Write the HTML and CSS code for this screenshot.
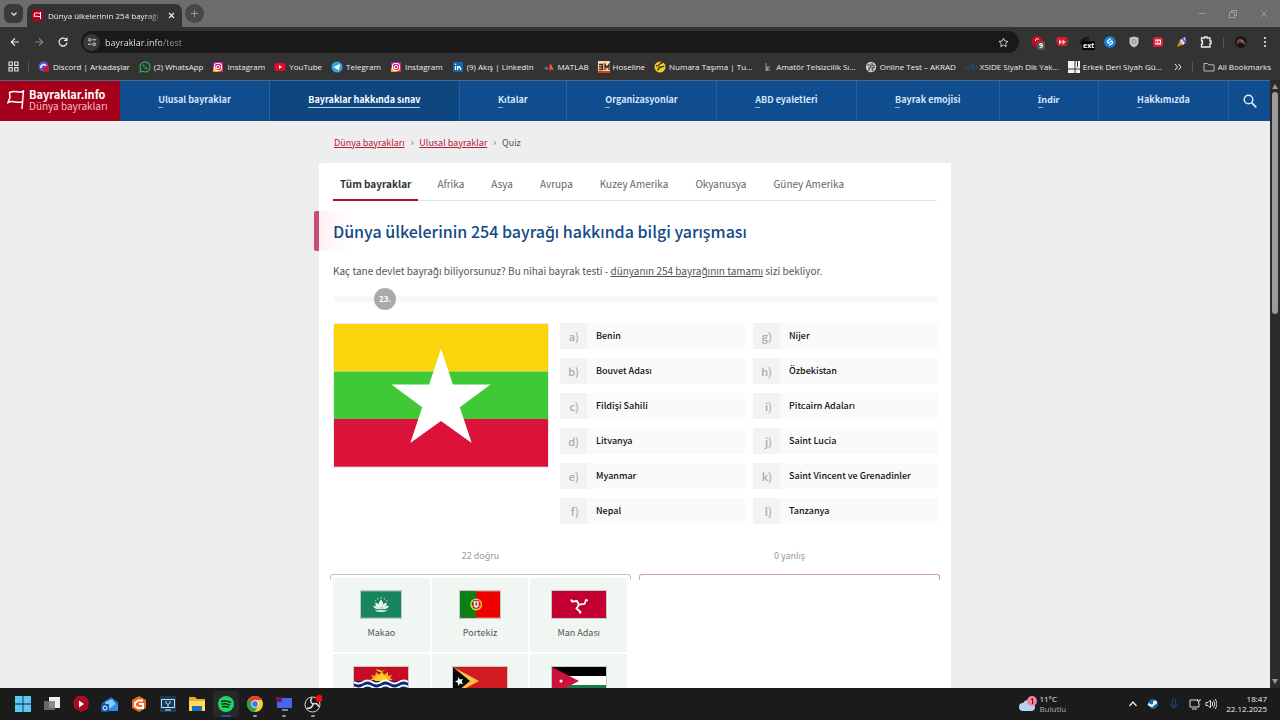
FILE: index.html
```html
<!DOCTYPE html>
<html lang="tr">
<head>
    <meta charset="UTF-8">
    <meta name="viewport" content="width=device-width, initial-scale=1.0">
    <title>Dünya ülkelerinin 254 bayrağı hakkında bilgi yarışması</title>
    <link rel="stylesheet" href="styles.css">
</head>
<body>
    <!-- Browser window -->
    <header class="browser">
        <div class="tab-strip">
            <button class="tab-search" aria-label="Search tabs">
                <svg width="8" height="8" viewBox="0 0 8 8"><path d="M1.5 2.8 4 5.2l2.5-2.4" fill="none" stroke="#eee" stroke-width="1.2"/></svg>
            </button>
            <div class="browser-tab">
                <svg width="11" height="11" viewBox="0 0 11 11"><rect width="11" height="11" rx="1" fill="#b00020"/><path d="M8.500 2v7M8.300 3C6 4 5 2 2.500 3.300L2 6.500c2.500-1 3.500.5 6 0" fill="none" stroke="#fff"/></svg>
                <span class="browser-tab-title">Dünya ülkelerinin 254 bayrağı h</span>
                <button class="tab-close" aria-label="Close">
                    <svg width="7" height="7" viewBox="0 0 7 7"><path d="m1 1 5 5M6 1 1 6" stroke="#eee" stroke-width="1.200"/></svg>
                </button>
            </div>
            <button class="new-tab" aria-label="New tab">
                <svg width="9" height="9" viewBox="0 0 9 9"><path d="M4.500 1v7M1 4.500h7" stroke="#999" stroke-width="1"/></svg>
            </button>
            <div class="window-buttons">
                <button aria-label="Minimize"><svg width="10" height="10" viewBox="0 0 10 10"><path d="M1.500 4.500h7" stroke="#999"/></svg></button>
                <button aria-label="Restore"><svg width="10" height="10" viewBox="0 0 10 10"><path d="M1.500 3.500h5v5h-5zM3.500 3V1.500h5v5H7" fill="none" stroke="#aaa" stroke-width=".8"/></svg></button>
                <button aria-label="Close window"><svg width="10" height="10" viewBox="0 0 10 10"><path d="m2 2 6 6M8 2 2 8" stroke="#aaa" stroke-width=".8"/></svg></button>
            </div>
        </div>

        <div class="toolbar">
            <button aria-label="Back"><svg width="12" height="12" viewBox="0 0 12 12"><path d="M10 6H2.500M6 2.300 2.300 6 6 9.700" fill="none" stroke="#eee" stroke-width="1.200"/></svg></button>
            <button aria-label="Forward"><svg width="12" height="12" viewBox="0 0 12 12"><path d="M2 6h7.500M6 2.300 9.700 6 6 9.700" fill="none" stroke="#888" stroke-width="1.100"/></svg></button>
            <button aria-label="Reload"><svg width="12" height="12" viewBox="0 0 12 12"><path d="M9.500 4A4 4 0 1 0 10 6.700M10 1.500v3H7" fill="none" stroke="#eee" stroke-width="1.200"/></svg></button>
            <div class="address-bar">
                <span class="site-info">
                    <svg width="10" height="10" viewBox="0 0 10 10"><path d="M5.500 2.800H9M1 7.200h3.500" stroke="#ddd"/><circle cx="2.800" cy="2.800" r="1.300" fill="none" stroke="#ddd"/><circle cx="7.200" cy="7.200" r="1.300" fill="none" stroke="#ddd"/></svg>
                </span>
                <input class="address" type="text" aria-label="Address" value="bayraklar.info/test">
                <svg width="11" height="11" viewBox="0 0 24 24"><path d="m12 2.500 2.900 6.300 6.900.8-5.100 4.700 1.400 6.800-6.100-3.400-6.100 3.400 1.400-6.800L2.200 9.600l6.900-.8z" fill="none" stroke="#ddd" stroke-width="2"/></svg>
            </div>
            <div class="extensions">
                <span class="extension"><svg width="14" height="14" viewBox="0 0 14 14"><path d="M4 1h5l3 3v5l-3 3H4L1 9V4z" fill="#c9081c"/><path d="M4.500 6V4.500Q6 2.500 8 4.500" fill="none" stroke="#fff"/></svg><b class="extension-badge gray">9</b></span>
                <span class="extension"><svg width="14" height="14" viewBox="0 0 14 14"><path d="M2 2h10l1 5-2 4H3L1 6z" fill="#d01c30"/><path d="m4 4.500 3 2.500-3 2.500zM7.500 4.500l3 2.500-3 2.500z" fill="#ffd9dd"/></svg></span>
                <span class="extension"><svg width="14" height="14" viewBox="0 0 14 14"><path d="M2 6q3-4 8-3M1 9q3-5 9-4" fill="none" stroke="#161616" stroke-width="1.500"/></svg><b class="extension-badge">ext</b></span>
                <span class="extension"><svg width="14" height="14" viewBox="0 0 14 14"><circle cx="7" cy="7" r="5.800" fill="#1687e0"/><path d="M7.800 3.800 5 5.500Q3.800 7 5.500 8l1.500-.8M6.200 10.200 9 8.500Q10.200 7 8.500 6L7 6.800" fill="none" stroke="#fff" stroke-width="1.200"/></svg></span>
                <span class="extension"><svg width="14" height="14" viewBox="0 0 14 14"><path d="m7 1.500 4.500 1.300v4.500Q11 11 7 12.500 3 11 2.500 7.300V2.800z" fill="#c5c5c5"/><circle cx="7" cy="6.500" r="2" fill="none" stroke="#8c8c8c"/></svg></span>
                <span class="extension"><svg width="14" height="14" viewBox="0 0 14 14"><rect x="2" y="2" width="10" height="10" rx="2" fill="#d81e34"/><path d="M4 4.500h6v5H4z" fill="#fff"/><path d="m4.500 5 2.500 2-2.500 2zM7.200 5l2.300 2-2.300 2z" fill="#d81e34"/></svg></span>
                <span class="extension"><svg width="14" height="14" viewBox="0 0 14 14"><path d="m2 12 3-7 4 4z" fill="#f08a24"/><path d="m5 5 5-3 1 5-3 3z" fill="#e5e2f5"/><path d="m7 3 4 5" stroke="#6454d0" stroke-width="2"/></svg></span>
                <span class="extension"><svg width="14" height="14" viewBox="0 0 14 14"><path d="M2.500 3H5.500V2h2.500v1h3v3h1v2.500h-1v3.500H2.500V9h1V6h-1z" fill="none" stroke="#eee" stroke-width="1.300"/></svg></span>
                <i class="divider"></i>
                <span class="extension"><svg width="14" height="14" viewBox="0 0 14 14"><circle cx="7" cy="7" r="6" fill="#171414"/><path d="M3 5q3-3 6 0l3 3-1 2-5-3-3 3z" fill="#713c3c"/><circle cx="8" cy="6" r="1.500" fill="#8c6663"/></svg></span>
                <span class="extension"><svg width="14" height="14" viewBox="0 0 14 14"><g fill="#eee"><circle cx="7" cy="3" r="1.100"/><circle cx="7" cy="7" r="1.100"/><circle cx="7" cy="11" r="1.100"/></g></svg></span>
            </div>
        </div>

        <nav class="bookmarks" aria-label="Bookmarks">
            <svg width="11" height="11" viewBox="0 0 11 11"><path d="M1 1h3.300v3.300H1zM6.700 1H10v3.300H6.700zM1 6.700h3.300V10H1zM6.700 6.700H10V10H6.700z" fill="none" stroke="#ddd" stroke-width="1.200"/></svg>
            <i class="divider"></i>
            <a href="#"><svg width="12" height="12" viewBox="0 0 12 12"><circle cx="5.500" cy="5.500" r="5" fill="#5a58d6"/><path d="M3 7V5q3-3 5 0" fill="none" stroke="#fff" stroke-width="1.500"/><circle cx="8.500" cy="8" r="3" fill="#d3122b"/></svg>Discord | Arkadaşlar</a>
            <a href="#"><svg width="12" height="12" viewBox="0 0 12 12"><path d="m1 11 .7-2.600A5 5 0 1 1 3.600 10.300z" fill="none" stroke="#2ab25b" stroke-width="1.200"/><path d="M4 3.500Q3.500 5 5 6.700T8.200 8l.4-1.200-1.300-.6-.7.600Q5.500 6.300 5 5.200l.6-.6L5 3.400z" fill="#2ab25b"/></svg>(2) WhatsApp</a>
            <a href="#"><svg width="12" height="12" viewBox="0 0 12 12"><path d="M1 1h10v5L1 11z" fill="#c0219b"/><path d="M1 11V7l3-2 7 6z" fill="#fba13a"/><path d="M11 4v7H7L4 6z" fill="#e52a5b"/><rect x="2.500" y="2.500" width="7" height="7" rx="2" fill="none" stroke="#fff"/><circle cx="6" cy="6" r="1.700" fill="none" stroke="#fff"/></svg>Instagram</a>
            <a href="#"><svg width="12" height="12" viewBox="0 0 12 12"><rect x=".5" y="2" width="11" height="8" rx="2" fill="#e00d2c"/><path d="m5 4.300 3 1.700-3 1.700z" fill="#fff"/></svg>YouTube</a>
            <a href="#"><svg width="12" height="12" viewBox="0 0 12 12"><circle cx="6" cy="6" r="5.500" fill="#34a6dc"/><path d="m2.500 6 6.500-3-1.200 6.200-2.300-1.500z" fill="#fff"/></svg>Telegram</a>
            <a href="#"><svg width="12" height="12" viewBox="0 0 12 12"><path d="M1 1h10v5L1 11z" fill="#c0219b"/><path d="M1 11V7l3-2 7 6z" fill="#fba13a"/><path d="M11 4v7H7L4 6z" fill="#e52a5b"/><rect x="2.500" y="2.500" width="7" height="7" rx="2" fill="none" stroke="#fff"/><circle cx="6" cy="6" r="1.700" fill="none" stroke="#fff"/></svg>Instagram</a>
            <a href="#"><svg width="12" height="12" viewBox="0 0 12 12"><rect x="1" y="1" width="10" height="10" rx="1" fill="#1267b1"/><path d="M3.500 5v4M5.700 9V5M5.700 7q1.500-2.500 2.800 0v2" fill="none" stroke="#fff" stroke-width="1.300"/><circle cx="3.500" cy="3.200" r=".8" fill="#fff"/></svg>(9) Akış | LinkedIn</a>
            <a href="#"><svg width="12" height="12" viewBox="0 0 12 12"><path d="m1 7 3-1.500L6 7 4 9z" fill="#3a8fc4"/><path d="m4 6 3.500-4L7 8 5 9z" fill="#9a2a1c"/><path d="M7.500 2 11 9.500 8.500 8 6.500 11z" fill="#ec6a25"/></svg>MATLAB</a>
            <a href="#"><svg width="12" height="12" viewBox="0 0 12 12"><rect width="12" height="12" fill="#f6d7b0"/><path d="M1 3.500h3.500v5H1M4 6H1M7 9V3.500l2 3 2-3V9" fill="none" stroke="#41240f" stroke-width="1.300"/><path d="M0 10h12v2H0z" fill="#e03a20"/></svg>Hoseline</a>
            <a href="#"><svg width="12" height="12" viewBox="0 0 12 12"><circle cx="6" cy="6" r="5.500" fill="#f7cc25"/><path d="M2 5q3 0 4-2t3-1M4 9.500q0-3 3-3.500t3-1" fill="none" stroke="#3c341c" stroke-width="1.400"/></svg>Numara Taşıma | Tu...</a>
            <a href="#"><svg width="12" height="12" viewBox="0 0 12 12"><path d="M4 2h2v3h3v5H4z" fill="#725d6e"/><path d="M6 6v4" stroke="#c8b8c4"/></svg>Amatör Telsizcilik Sı...</a>
            <a href="#"><svg width="12" height="12" viewBox="0 0 12 12"><circle cx="6" cy="6" r="5.200" fill="#c9c9c9"/><path d="M2 4h3l1 2-2 1v3M7 2v2l3 1M10 7 8 6.500 7 8l1 2" fill="none" stroke="#444" stroke-width="1.200"/></svg>Online Test – AKRAD</a>
            <a href="#"><svg width="12" height="12" viewBox="0 0 12 12"><path d="M1 4v4h3M5 4v4M7 4h2v4H7zM11.500 4v4" fill="none" stroke="#165488"/></svg>XSIDE Siyah Dik Yak...</a>
            <a href="#"><svg width="12" height="12" viewBox="0 0 12 12"><path d="M0 0h12v12H0z" fill="#f3f3f3"/><path d="M7 0v12M0 8h12M9.500 0v6" stroke="#333"/></svg>Erkek Deri Siyah Gü...</a>
            <div class="bookmarks-end">
                <svg width="8" height="8" viewBox="0 0 8 8"><path d="m1 1 2.500 3L1 7M4.500 1 7 4 4.500 7" fill="none" stroke="#eee"/></svg>
                <i class="divider"></i>
                <a href="#"><svg width="12" height="12" viewBox="0 0 12 12"><path d="M1 2.500h3.500l1.200 1.300H11V10H1z" fill="none" stroke="#bbb"/></svg>All Bookmarks</a>
            </div>
        </nav>
    </header>

    <!-- Page content -->
    <div class="viewport">
        <div class="page">
            <header class="site-header">
                <a class="logo" href="#">
                    <svg width="18" height="22" viewBox="0 0 18 22"><path d="m16.500 1-1.500 19M16 2.500c-5 2-7-2-13.500 1l.5 5-2 5c6-3 8.500 1.500 14.300-.8" fill="none" stroke="#fff" stroke-width="1.500"/></svg>
                    <span class="logo-text"><strong>Bayraklar.info</strong><span>Dünya bayrakları</span></span>
                </a>
                <nav class="main-nav">
                    <a href="#"><span>Ulusal bayraklar</span></a>
                    <a href="#" class="active"><span>Bayraklar hakkında sınav</span></a>
                    <a href="#"><span>Kıtalar</span></a>
                    <a href="#"><span>Organizasyonlar</span></a>
                    <a href="#"><span>ABD eyaletleri</span></a>
                    <a href="#"><span>Bayrak emojisi</span></a>
                    <a href="#" class="download"><span>İndir</span></a>
                    <a href="#"><span>Hakkımızda</span></a>
                </nav>
                <button class="search-btn" aria-label="Ara">
                    <svg width="14" height="14" viewBox="0 0 14 14"><circle cx="5.500" cy="5.500" r="4.300" fill="none" stroke="#dfeaf7" stroke-width="1.500"/><path d="m8.800 8.800 4.500 4.500" stroke="#dfeaf7" stroke-width="1.800"/></svg>
                </button>
            </header>

            <main class="content">
                <nav class="breadcrumb">
                    <a href="#">Dünya bayrakları</a><span class="sep">›</span><a href="#">Ulusal bayraklar</a><span class="sep">›</span><span>Quiz</span>
                </nav>

                <section class="card">
                    <nav class="region-tabs">
                        <a href="#" class="active">Tüm bayraklar</a>
                        <a href="#">Afrika</a>
                        <a href="#">Asya</a>
                        <a href="#">Avrupa</a>
                        <a href="#">Kuzey Amerika</a>
                        <a href="#">Okyanusya</a>
                        <a href="#">Güney Amerika</a>
                    </nav>

                    <h1>Dünya ülkelerinin 254 bayrağı hakkında bilgi yarışması</h1>
                    <p class="intro">Kaç tane devlet bayrağı biliyorsunuz? Bu nihai bayrak testi - <a href="#">dünyanın 254 bayrağının tamamı</a> sizi bekliyor.</p>

                    <div class="progress"><span class="progress-step">23.</span></div>

                    <div class="quiz">
                        <svg class="question-flag" viewBox="0 0 216 144"><path fill="#fad50b" d="M0 0h216v48H0z"/><path fill="#40c937" d="M0 48h216v48H0z"/><path fill="#db133b" d="M0 96h216v48H0z"/><path fill="#fff" d="m108 25 12 36h38l-31 23 12 36-31-22-31 22 12-36-31-23h38z"/></svg>
                        <div class="answers">
                            <button class="answer"><span class="key">a)</span>Benin</button>
                            <button class="answer"><span class="key">b)</span>Bouvet Adası</button>
                            <button class="answer"><span class="key">c)</span>Fildişi Sahili</button>
                            <button class="answer"><span class="key">d)</span>Litvanya</button>
                            <button class="answer"><span class="key">e)</span>Myanmar</button>
                            <button class="answer"><span class="key">f)</span>Nepal</button>
                            <button class="answer"><span class="key">g)</span>Nijer</button>
                            <button class="answer"><span class="key">h)</span>Özbekistan</button>
                            <button class="answer"><span class="key">i)</span>Pitcairn Adaları</button>
                            <button class="answer"><span class="key">j)</span>Saint Lucia</button>
                            <button class="answer"><span class="key">k)</span>Saint Vincent ve Grenadinler</button>
                            <button class="answer"><span class="key">l)</span>Tanzanya</button>
                        </div>
                    </div>

                    <div class="results">
                        <div class="result correct">
                            <p>22 doğru</p>
                            <div class="bracket"></div>
                            <div class="flags">
                                <figure>
                                    <svg width="40" height="27" viewBox="0 0 42 28"><path fill="#178560" d="M0 0h42v28H0z"/><g fill="#e9f5ee"><path d="M21 9c3 3 3 6 0 9-3-3-3-6 0-9M15 12q5 1 5 6-5 0-5-6M27 12q-5 1-5 6 5 0 5-6M13 15q0 4 6 4h4q6 0 6-4-3 0-5 3h-6q-2-3-5-3M14 20h14q-7 4-14 0"/></g><path d="M20.300 7h1.500M17 8h1.200M24 8h1.200M14.500 10h1M26.800 10h1" stroke="#efd83f" stroke-width="1.300"/></svg>
                                    <figcaption>Makao</figcaption>
                                </figure>
                                <figure>
                                    <svg width="40" height="27" viewBox="0 0 42 28"><path fill="#f00000" d="M0 0h42v28H0z"/><path fill="#0b8015" d="M0 0h17v28H0z"/><circle cx="17" cy="14" r="5.500" fill="none" stroke="#ead33a" stroke-width="1.500"/><path d="m12 10 10 7M12 17l10-7" stroke="#ead33a" stroke-width=".8"/><path d="M14 10h6v5q-1 3-3 3t-3-3z" fill="#fff" stroke="#dd1b22"/><path d="M17 11v5M15.500 13.500h3" stroke="#254c9d"/></svg>
                                    <figcaption>Portekiz</figcaption>
                                </figure>
                                <figure>
                                    <svg width="54" height="27" viewBox="0 0 54 27"><path fill="#c3002f" d="M0 0h54v28H0z"/><path d="m27 14-2-4-5 .5-1-2M27 13.500l5.500-.5 1.500-4 2 .5M27 13.500l-2.500 4 4 3.500-1 1.500" fill="none" stroke="#fff" stroke-width="1.800"/></svg>
                                    <figcaption>Man Adası</figcaption>
                                </figure>
                                <figure>
                                    <svg width="54" height="27" viewBox="0 0 54 27"><path fill="#c60b24" d="M0 0h54v15H0z"/><path d="m16 13 3-2-2-3 4 1 1-4 3 3 3-4 2 4 4-3v4l4-1-2 3 3 2z" fill="#f1b51d"/><circle cx="27" cy="13" r="6" fill="#ffd028"/><path d="m21 2 5 1 2 1 4-2-4 3h-3z" fill="#e9bb31"/><path fill="#102873" d="M0 14h54v14H0z"/><path d="M0 15q4.500 3 9 0t9 0 9 0 9 0 9 0 9 0M0 20q4.500 3 9 0t9 0 9 0 9 0 9 0 9 0M0 25q4.500 3 9 0t9 0 9 0 9 0 9 0 9 0" fill="none" stroke="#fff" stroke-width="2"/></svg>
                                    <figcaption>Kiribati</figcaption>
                                </figure>
                                <figure>
                                    <svg width="54" height="27" viewBox="0 0 54 27"><path fill="#d21c22" d="M0 0h54v28H0z"/><path fill="#f8c345" d="m0 0 26 14L0 28z"/><path fill="#080808" d="m0 0 17 14L0 28z"/><path fill="#fff" d="m5 10 2 2.500 3-.5-1.500 2.600L10 17l-3-.6L5 19l-.2-3.300L2 14.500l2.800-1.200z"/></svg>
                                    <figcaption>Doğu Timor</figcaption>
                                </figure>
                                <figure>
                                    <svg width="54" height="27" viewBox="0 0 54 27"><path d="M0 0h54v9H0z"/><path fill="#fff" d="M0 9h54v10H0z"/><path fill="#16804b" d="M0 18h54v9H0z"/><path fill="#ce123e" d="m0 0 27 14L0 28z"/><circle cx="9" cy="14" r="1.500" fill="#fff"/></svg>
                                    <figcaption>Ürdün</figcaption>
                                </figure>
                            </div>
                        </div>
                        <div class="result wrong">
                            <p>0 yanlış</p>
                            <div class="bracket"></div>
                        </div>
                    </div>
                </section>
            </main>
        </div>
        <div class="scrollbar">
            <i class="arrow-up"></i>
            <i class="thumb"></i>
            <i class="arrow-down"></i>
        </div>
    </div>

    <!-- Taskbar -->
    <footer class="taskbar">
        <div class="apps">
            <button aria-label="Start"><svg width="18" height="18" viewBox="0 0 18 18"><path fill="#59c8f5" d="M1 1h7.600v7.600H1zM9.400 1H17v7.600H9.400zM1 9.400h7.600V17H1zM9.400 9.400H17V17H9.400z"/></svg></button>
            <button aria-label="Task view"><svg width="18" height="18" viewBox="0 0 18 18"><path fill="#eee" d="M6 2h11v11H6z"/><path fill="#777" d="M1 6h11v9H1z" opacity=".85"/></svg></button>
            <button aria-label="Player"><svg width="18" height="18" viewBox="0 0 18 18"><path d="m5 1 8 0 4 5-1 8-7 3-7-4-1-7z" fill="#a50b2b"/><path d="m7 5.500 5 3.500-5 3.500z" fill="#fff"/></svg></button>
            <button aria-label="Mail"><svg width="18" height="18" viewBox="0 0 18 18"><path d="m1 8 9-6 7 5v9H1z" fill="#1b65cd"/><path d="m4 7 7-3 4 5-8 6z" fill="#87c9f9"/><path d="m6 16 11-8v8z" fill="#2f8ff0"/><rect y="9" width="8" height="8" rx="1" fill="#1552ad"/><circle cx="4" cy="13" r="2" fill="none" stroke="#fff"/></svg></button>
            <button aria-label="Cura"><svg width="18" height="18" viewBox="0 0 18 18"><path d="m9 1 7 4v8l-7 4-7-4V5z" fill="#f0691e"/><path d="M13 5.500H8L5 8v3l3 2h5V9H9" fill="none" stroke="#fff" stroke-width="2"/></svg></button>
            <button aria-label="Monitor"><svg width="18" height="18" viewBox="0 0 18 18"><path fill="#173d5b" d="M1 1h16v16H1z"/><path d="M2.500 4.500h13v8h-13zM6 15h6M7 6v2q2 3 4 0V6M9 9v3" fill="none" stroke="#cbdce8"/></svg></button>
            <button aria-label="File explorer"><svg width="18" height="18" viewBox="0 0 18 18"><path d="M1 2h6l2 2h8v12H1z" fill="#e9ad25"/><path fill="#fddb61" d="M1 6h16v10H1z"/><path fill="#1675b9" d="M4 11h10v5H4z"/></svg></button>
            <button class="current" aria-label="Spotify"><svg width="18" height="18" viewBox="0 0 18 18"><circle cx="9" cy="9" r="8" fill="#1ed760"/><path d="M4 6.500q5-1.500 10 1M4.500 9.200q4.500-1.200 8.500 1M5 11.800q4-1 7 .7" fill="none" stroke="#10251a" stroke-width="1.400"/></svg></button>
            <button class="open" aria-label="Chrome"><svg width="18" height="18" viewBox="0 0 18 18"><circle cx="9" cy="9" r="8" fill="#fcc934"/><path d="M9 9 2.100 5A8 8 0 0 1 16 5H9z" fill="#e5402f"/><path d="M2.100 5A8 8 0 0 0 8.500 17L12 11 9 9z" fill="#2ba14b"/><circle cx="9" cy="9" r="3.700" fill="#fff"/><circle cx="9" cy="9" r="2.900" fill="#3979e8"/></svg></button>
            <button class="open" aria-label="Remote desktop"><svg width="18" height="18" viewBox="0 0 18 18"><path fill="#4965ee" d="M2 3h15v10H2z"/><path fill="#6b1763" d="M1 2h6v5H1z"/><path d="M7 15h6" stroke="#9eabc4" stroke-width="1.500"/></svg></button>
            <button class="open" aria-label="OBS"><svg width="18" height="18" viewBox="0 0 18 18"><circle cx="8.500" cy="9.500" r="7.500" fill="#171717" stroke="#ddd"/><path d="M8 3q-3 4 1 6M3 13q5 1 6-4M15 12q-2-5-6-3" fill="none" stroke="#ddd" stroke-width="1.500"/><circle cx="15" cy="3.500" r="3.500" fill="#ee1010"/></svg></button>
        </div>
        <div class="weather">
            <svg width="20" height="18" viewBox="0 0 20 18"><path d="M5 16a4 4 0 0 1 0-8Q9 2 13 8q4 0 4 4t-4 4z" fill="#b8d0f2"/><circle cx="14" cy="6" r="5" fill="#f77f97"/><path d="m13 4.500 1.500-1V9" fill="none" stroke="#431722"/></svg>
            <div><span>11°C</span><span class="weather-state">Bulutlu</span></div>
        </div>
        <div class="tray">
            <svg width="10" height="10" viewBox="0 0 10 10"><path d="m1.500 7 3.500-4 3.500 4" fill="none" stroke="#eee" stroke-width="1.200"/></svg>
            <svg width="12" height="12" viewBox="0 0 12 12"><path d="M1 6a5 5 0 1 1 2 4z" fill="#176aa6"/><path d="m1 6 4 2 3-3" fill="none" stroke="#eef8ff" stroke-width="2"/><circle cx="8" cy="4.500" r="2" fill="#eef8ff"/></svg>
            <svg width="12" height="12" viewBox="0 0 12 12"><rect x="4.500" y="1" width="3" height="6" rx="1.500" fill="none" stroke="#174c8f"/><path d="M2.500 5.500q0 3.500 3.500 3.500t3.500-3.500M6 9v2" fill="none" stroke="#174c8f"/></svg>
            <div class="tray-group">
                <svg width="12" height="12" viewBox="0 0 12 12"><path d="M8 2H1v7h9V6M3 11h5M8.500 1v2h2.500V1M9.700 3v3" fill="none" stroke="#ddd"/></svg>
                <svg width="12" height="12" viewBox="0 0 12 12"><path d="M1 4.500v3h2L5.500 10V2L3 4.500zM7 4q1.500 2 0 4M8.500 2.500q3 3.500 0 7M10 1q4 5 0 10" fill="none" stroke="#ddd"/></svg>
            </div>
            <div class="clock"><span>18:47</span><span>22.12.2025</span></div>
        </div>
    </footer>
</body>
</html>
```

FILE: styles.css
```css
* {
    box-sizing: border-box;
}

body {
    margin: 0;
    height: 100vh;
    display: flex;
    flex-direction: column;
    overflow: hidden;
    font-family: "Noto Sans CJK SC", "Noto Sans", sans-serif;
    font-size: 10px;
    color: #555;
    background-color: #eee;
}

button {
    margin: 0;
    padding: 0;
    border: none;
    background: none;
    color: inherit;
    font: inherit;
    cursor: pointer;
}

svg {
    display: block;
    flex-shrink: 0;
}

/* Browser */
.browser,
.taskbar {
    font-family: "Open Sans", "Noto Sans", sans-serif;
    font-size: 8px;
    color: #eee;
}

.browser {
    background-color: #333;
}

.tab-strip {
    display: flex;
    align-items: center;
    height: 27px;
    padding-left: 4px;
    background-color: #6c6c6c;
}

.tab-search,
.new-tab {
    display: flex;
    align-items: center;
    justify-content: center;
    width: 19px;
    height: 19px;
    border-radius: 6px;
    background-color: #3a3a3a;
}

.new-tab {
    margin-left: 3px;
    border-radius: 50%;
    background-color: #484848;
}

.browser-tab {
    display: flex;
    align-items: center;
    align-self: flex-end;
    gap: 5px;
    width: 155px;
    height: 23px;
    margin-left: 4px;
    padding: 0 7px 0 5px;
    border-radius: 7px 7px 0 0;
    background-color: #333;
}

.browser-tab-title {
    flex: 1;
    overflow: hidden;
    white-space: nowrap;
    mask-image: linear-gradient(90deg, #000 85%, transparent);
}

.window-buttons {
    display: flex;
    gap: 21px;
    margin-left: auto;
    padding-right: 11px;
}

.toolbar {
    display: flex;
    align-items: center;
    gap: 12px;
    height: 30px;
    padding: 0 8px 0 9px;
}

.address-bar {
    flex: 1;
    display: flex;
    align-items: center;
    gap: 5px;
    height: 22px;
    padding: 0 10px 0 2px;
    border-radius: 11px;
    background-color: #191919;
}

.site-info {
    display: flex;
    align-items: center;
    justify-content: center;
    width: 17px;
    height: 17px;
    border-radius: 50%;
    background-color: #383838;
}

.address {
    flex: 1;
    min-width: 0;
    padding: 0;
    border: none;
    outline: none;
    font: inherit;
    font-size: 9px;
    color: transparent;
    background: linear-gradient(90deg, #eee 57px, #999 57px);
    background-clip: text;
}

.extensions {
    display: flex;
    align-items: center;
    gap: 10px;
}

.extension {
    position: relative;
}

.extension-badge {
    position: absolute;
    top: 6px;
    left: 3px;
    padding: 0 1px;
    border-radius: 2px;
    background-color: #000;
    color: #fff;
    font-size: 7px;
    line-height: 9px;
}

.extension-badge.gray {
    left: 6px;
    padding: 0 2px;
    background-color: #555;
}

.divider {
    width: 1px;
    height: 11px;
    background-color: #555;
}

.bookmarks {
    display: flex;
    align-items: center;
    gap: 9px;
    height: 23px;
    padding: 0 9px 4px 8px;
    white-space: nowrap;
}

.bookmarks a {
    display: flex;
    align-items: center;
    gap: 3px;
    color: inherit;
    text-decoration: none;
}

.bookmarks-end {
    display: flex;
    align-items: center;
    gap: 10px;
    margin-left: auto;
}

/* Page */
.viewport {
    flex: 1;
    min-height: 0;
    display: flex;
}

.page {
    flex: 1;
    min-width: 0;
    overflow: hidden;
}

.scrollbar {
    display: flex;
    flex-direction: column;
    align-items: center;
    gap: 3px;
    width: 10px;
    padding: 4px 0;
    background-color: #2b2b2b;
}

.arrow-up,
.arrow-down {
    border: 3px solid transparent;
}

.arrow-up {
    border-top: none;
    border-bottom: 5px solid #9b9b9b;
}

.arrow-down {
    margin-top: auto;
    border-bottom: none;
    border-top: 5px solid #9b9b9b;
}

.thumb {
    width: 6px;
    height: 37%;
    border-radius: 3px;
    background-color: #9b9b9b;
}

.site-header {
    display: flex;
    height: 41px;
    border-top: 1px solid #47698f;
    background-color: #0f4d8e;
}

.logo {
    display: flex;
    align-items: center;
    gap: 4px;
    width: 120px;
    padding: 0 0 2px 7px;
    background-color: #a50019;
    color: #fff;
    text-decoration: none;
}

.logo-text {
    display: flex;
    flex-direction: column;
    line-height: 12px;
}

.logo-text strong {
    font-size: 11px;
}

.logo-text span {
    color: #f3bfc7;
}

.main-nav {
    flex: 1;
    display: flex;
}

.main-nav a {
    flex: 1 1 auto;
    display: flex;
    align-items: center;
    justify-content: center;
    border-right: 1px solid #28609b;
    padding-bottom: 4px;
    color: #d5e6f7;
    font-size: 9px;
    font-weight: bold;
    text-decoration: none;
    white-space: nowrap;
}

.main-nav .active {
    background-color: #0e4680;
    color: #fff;
}

/* dotted capital I is missing from the main font */
.main-nav .download {
    font-family: "Noto Sans", sans-serif;
}

.main-nav span {
    position: relative;
}

.main-nav span::after {
    content: "";
    position: absolute;
    left: 0;
    bottom: -2px;
    width: 5px;
    height: 1px;
    background-color: #7fb2e2;
}

.main-nav .active span::after {
    width: 100%;
    background-color: #b4d0ec;
}

.search-btn {
    display: flex;
    align-items: center;
    justify-content: center;
    width: 41px;
}

.content {
    width: 632px;
    max-width: 100%;
    margin: 0 auto;
}

.breadcrumb {
    display: flex;
    align-items: center;
    height: 42px;
    padding-left: 15px;
    font-size: 9px;
}

.breadcrumb a {
    color: #b7203c;
}

.sep {
    margin: 0 6px;
}

.card {
    padding: 6px 14px 0;
    border-radius: 2px;
    background-color: #fff;
}

.region-tabs {
    display: flex;
    gap: 11px;
    border-bottom: 1px solid #e5e5e5;
}

.region-tabs a {
    padding: 0 8px;
    line-height: 30px;
    color: #666;
    text-decoration: none;
    border-bottom: 2px solid transparent;
    margin-bottom: -1px;
}

.region-tabs .active {
    padding: 0 7px;
    border-color: #a8142f;
    color: #333;
    font-weight: bold;
}

h1 {
    margin: 10px -14px 0 -19px;
    padding-left: 14px;
    border-left: 5px solid #c44f70;
    border-radius: 2px;
    background: linear-gradient(90deg, #fff0f2, #fff 34px);
    color: #114a86;
    font-size: 16px;
    font-weight: 500;
    line-height: 40px;
}

.intro {
    margin: 12px 0 0;
    line-height: 16px;
}

.intro a {
    color: inherit;
}

.progress {
    display: flex;
    align-items: center;
    height: 6px;
    margin-top: 17px;
    background-color: #f8f8f8;
}

.progress-step {
    width: 22px;
    margin-left: 41px;
    border-radius: 50%;
    background-color: #aaa;
    color: #fff;
    font-size: 8px;
    font-weight: bold;
    line-height: 22px;
    text-align: center;
}

.quiz {
    display: flex;
    align-items: flex-start;
    gap: 11px;
    margin: 21px -1px 0 0;
}

.question-flag {
    width: 216px;
    border: 1px solid #eee;
}

.answers {
    flex: 1;
    display: grid;
    grid-template-columns: 1fr 1fr;
    grid-template-rows: repeat(6, 26px);
    grid-auto-flow: column;
    gap: 9px 8px;
}

.answer {
    display: flex;
    align-items: center;
    gap: 9px;
    background-color: #fafafa;
    color: #111;
    font-size: 9px;
    font-weight: 500;
    line-height: 26px;
}

.key {
    width: 27px;
    padding-right: 8px;
    background-color: #f3f3f3;
    color: #aaa;
    font-size: 11px;
    text-align: right;
}

.results {
    display: grid;
    grid-template-columns: 1fr 1fr;
    gap: 8px;
    margin: 24px -3px 0;
    font-size: 9px;
}

.result p {
    margin: 0 0 10px;
    color: #999;
    line-height: 16px;
    text-align: center;
}

.bracket {
    height: 6px;
    border: 1px solid #bcc9bc;
    border-bottom: none;
    border-radius: 3px 3px 0 0;
}

.wrong .bracket {
    border-color: #cda5ab;
}

.flags {
    display: grid;
    grid-template-columns: repeat(3, 1fr);
    gap: 2px;
    margin: -2px 4px 0 3px;
}

figure {
    display: flex;
    flex-direction: column;
    align-items: center;
    gap: 6px;
    height: 74px;
    margin: 0;
    padding-top: 12px;
    background-color: #f0f6f1;
}

figure svg {
    box-sizing: content-box;
    border: 1px solid #c8c8c8;
}

figcaption {
    line-height: 16px;
}

/* Taskbar */
.taskbar {
    display: flex;
    align-items: center;
    height: 32px;
    background-color: #1b1b1b;
    line-height: 10px;
}

.apps {
    display: flex;
    gap: 3px;
    padding-left: 10px;
}

.apps button {
    position: relative;
    display: flex;
    align-items: center;
    justify-content: center;
    width: 26px;
    height: 26px;
    border-radius: 3px;
}

.apps .current {
    background-color: #292929;
}

.apps .open::after,
.apps .current::after {
    content: "";
    position: absolute;
    bottom: 0;
    width: 4px;
    height: 2px;
    border-radius: 1px;
    background-color: #999;
}

.apps .current::after {
    width: 10px;
    background-color: #1c579b;
}

.weather {
    display: flex;
    align-items: center;
    gap: 1px;
    margin-left: auto;
    margin-right: 62px;
}

.weather div,
.clock {
    display: flex;
    flex-direction: column;
}

.weather-state {
    color: #aaa;
}

.tray {
    display: flex;
    align-items: center;
    gap: 9px;
    padding-right: 13px;
}

.tray-group {
    display: flex;
    gap: 4px;
}

.clock {
    text-align: right;
}
```
